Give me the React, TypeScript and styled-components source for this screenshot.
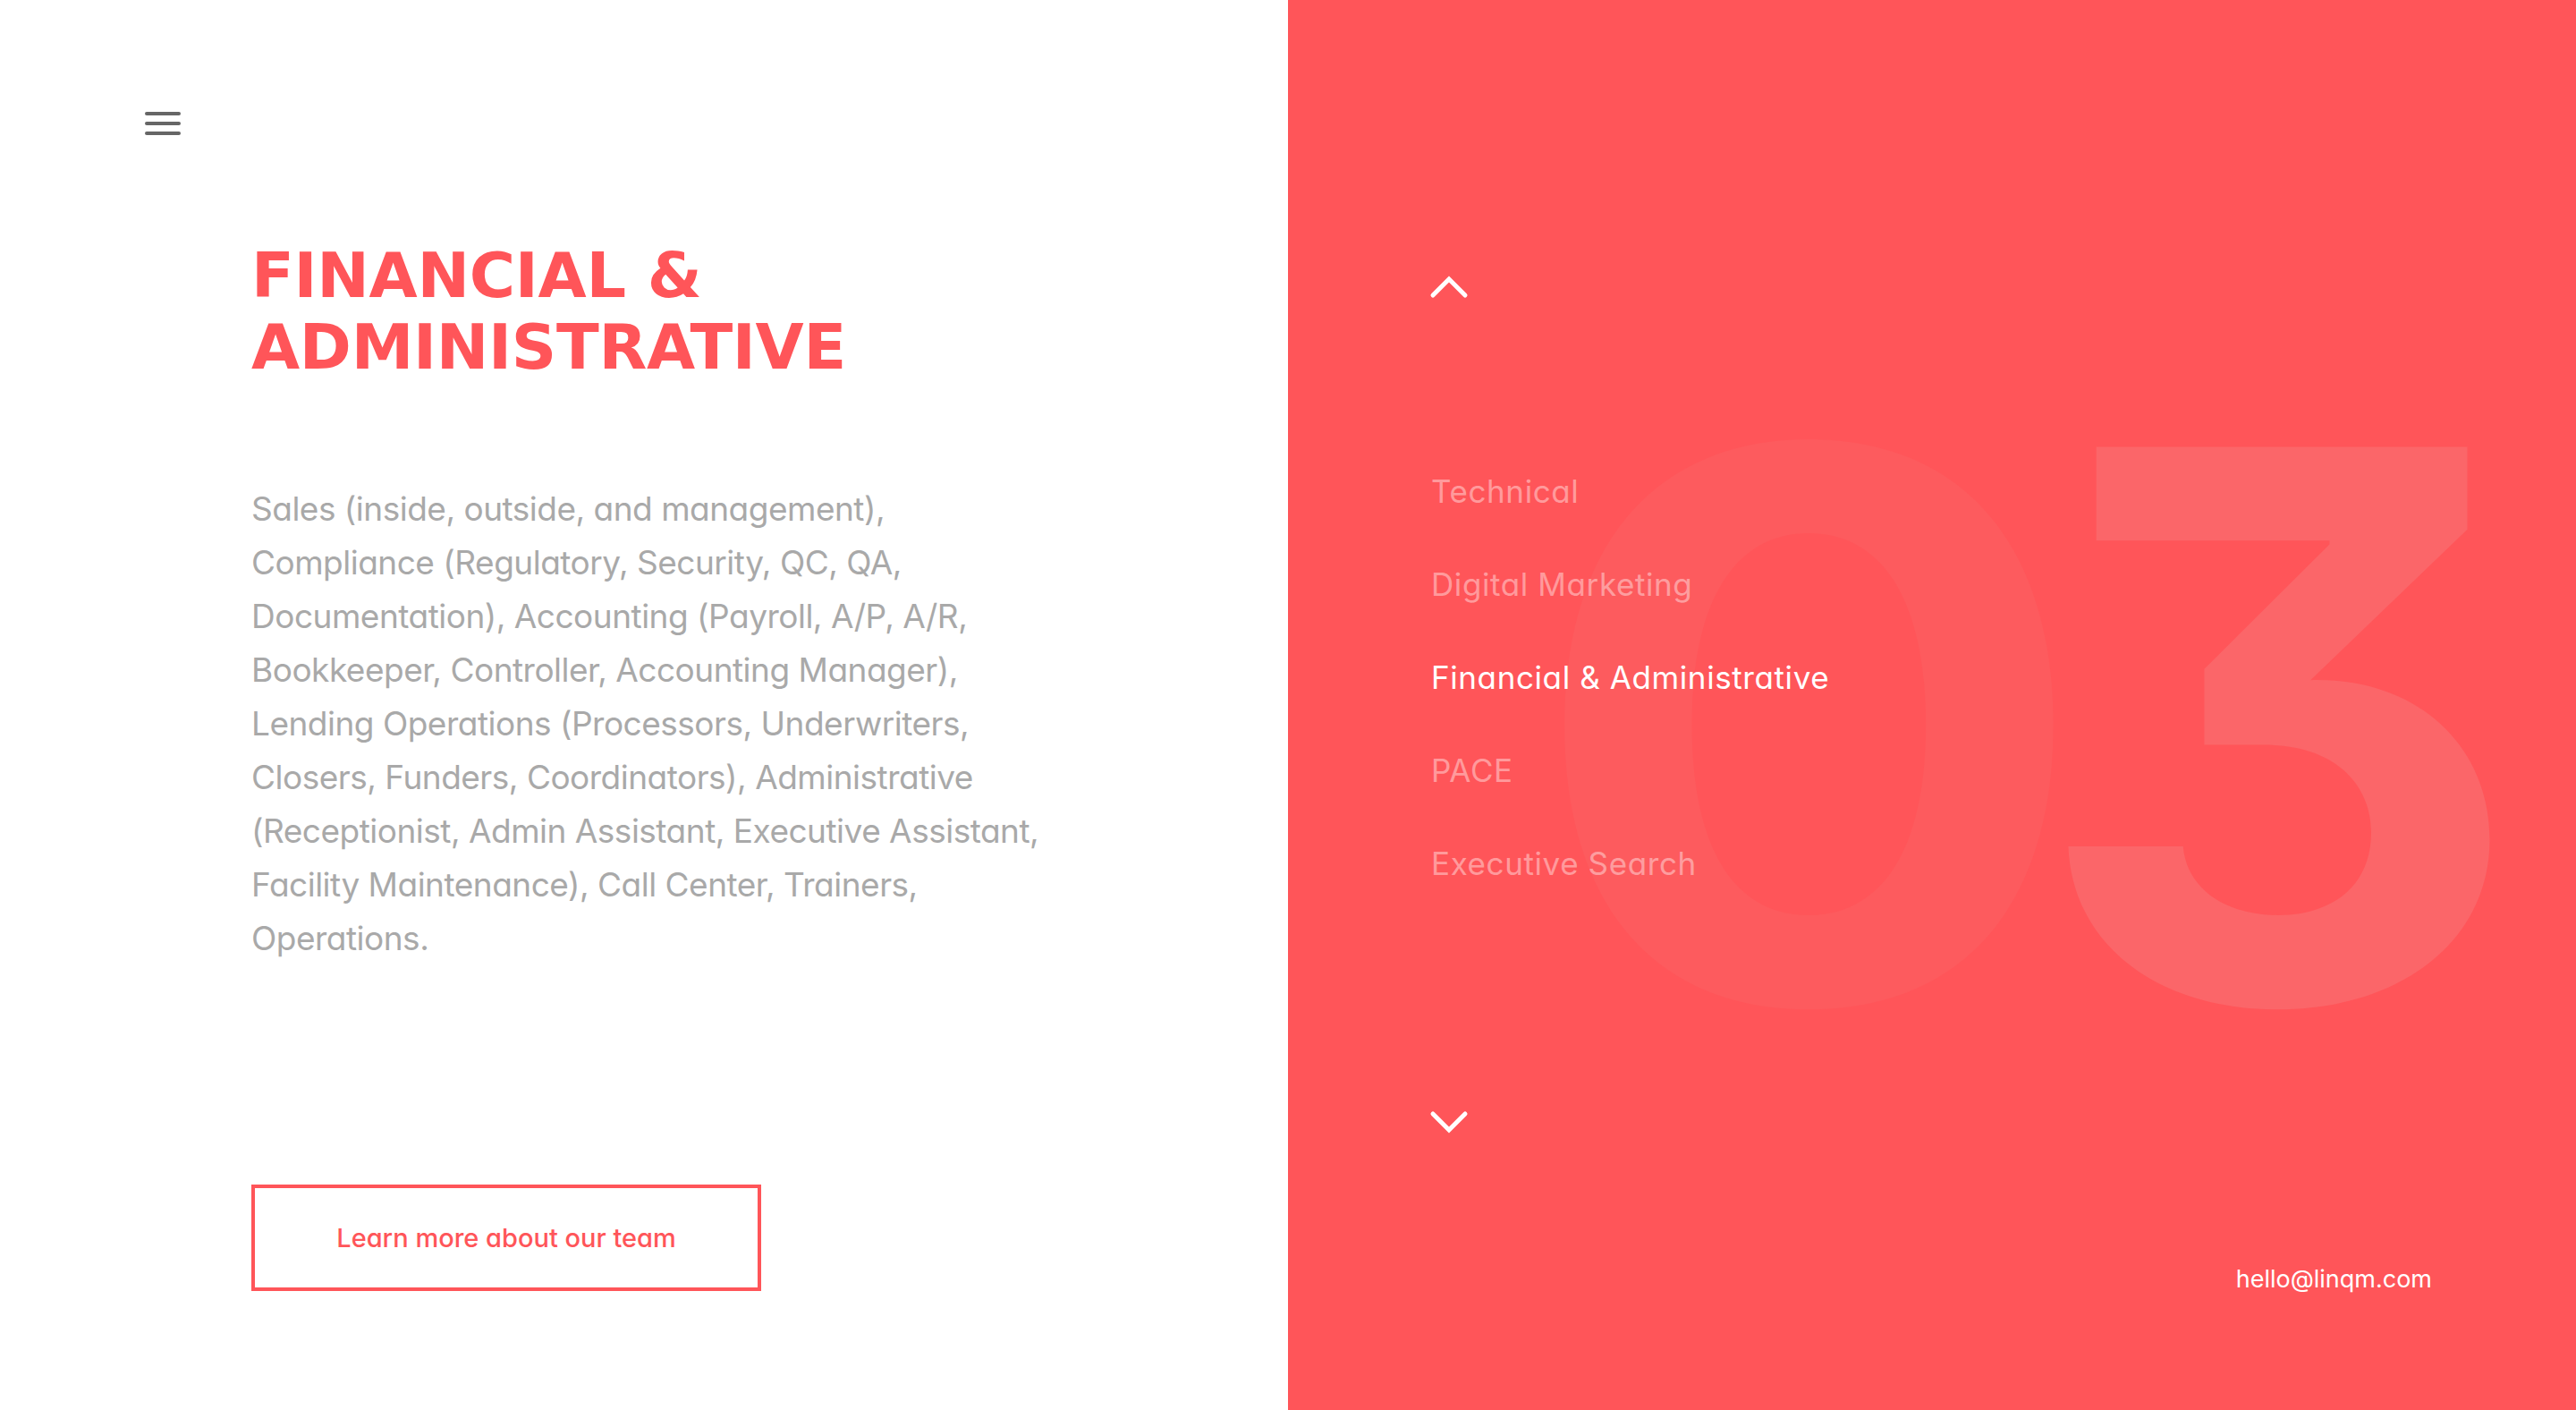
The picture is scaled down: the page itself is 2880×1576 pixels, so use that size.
import React from "react";
import styled, { createGlobalStyle } from "styled-components";

const RED = "#ff5559";
const FUTURA = `"Inter", "Liberation Sans", sans-serif`;
const HEAD = `"DejaVu Sans", "Liberation Sans", Arial, sans-serif`;

const GlobalStyle = createGlobalStyle`
  html, body { margin: 0; padding: 0; background: #fff; }
  body { font-family: ${FUTURA}; }
  * { box-sizing: border-box; }
`;

const Page = styled.div`
  display: grid;
  grid-template-columns: 1440px 1440px;
  width: 2880px;
  height: 1576px;
  overflow: hidden;
`;

const LeftPanel = styled.section`
  background: #fff;
  display: flex;
  flex-direction: column;
  padding: 125px 0 133px 162px;
`;

const MenuButton = styled.button`
  display: flex;
  flex-direction: column;
  gap: 7px;
  width: 40px;
  padding: 0;
  border: 0;
  background: none;
  cursor: pointer;
`;

const MenuBar = styled.span`
  display: block;
  width: 40px;
  height: 4px;
  border-radius: 2px;
  background: #666;
`;

const Content = styled.div`
  display: flex;
  flex-direction: column;
  flex: 1;
  margin-left: 119px;
`;

const Title = styled.h1`
  margin: 117px 0 0;
  font-family: ${HEAD};
  font-weight: 700;
  font-size: 70px;
  line-height: 80px;
  letter-spacing: -0.3px;
  color: ${RED};
  text-transform: uppercase;
`;

const Description = styled.p`
  margin: 111px 0 0;
  font-family: ${FUTURA};
  font-feature-settings: "cv11";
  font-weight: 400;
  font-size: 37px;
  line-height: 60px;
  letter-spacing: -0.5px;
  color: #a9a9a9;
  white-space: nowrap;
`;

const TeamButton = styled.a`
  margin-top: auto;
  display: flex;
  align-items: center;
  justify-content: center;
  width: 570px;
  height: 119px;
  border: 4px solid ${RED};
  color: ${RED};
  font-family: ${FUTURA};
  font-feature-settings: "cv11";
  font-weight: 500;
  font-size: 29px;
  text-decoration: none;
`;

const RightPanel = styled.section`
  position: relative;
  background: ${RED};
  display: flex;
  flex-direction: column;
  align-items: flex-start;
  padding: 305px 161px 0 160px;
  overflow: hidden;
`;

const BigNumber = styled.div`
  position: absolute;
  top: 384px;
  left: 266px;
  display: flex;
  font-family: "Inter", sans-serif;
  font-feature-settings: "cv09";
  font-weight: 700;
  font-size: 853px;
  line-height: 1;
  pointer-events: none;
`;

const Digit = styled.span<{ $faint?: boolean }>`
  display: inline-block;
  color: ${(p) => (p.$faint ? "#fd5b5e" : "#fb6669")};
  margin-left: ${(p) => (p.$faint ? "0" : "-10px")};
  transform: ${(p) => (p.$faint ? "scaleX(1.1)" : "none")};
  transform-origin: left center;
`;

const ChevronButton = styled.button`
  position: relative;
  z-index: 1;
  display: block;
  margin-left: -2px;
  padding: 0;
  border: 0;
  background: none;
  cursor: pointer;
  line-height: 0;
`;

const NavList = styled.ul`
  position: relative;
  z-index: 1;
  list-style: none;
  margin: 160px 0 221px;
  padding: 0;
`;

const NavItem = styled.li<{ $active?: boolean }>`
  font-family: ${FUTURA};
  font-feature-settings: "cv11";
  font-weight: 400;
  font-size: 35px;
  line-height: 104px;
  letter-spacing: 0.6px;
  white-space: nowrap;
  color: ${(p) => (p.$active ? "#ffffff" : "rgba(255,255,255,0.42)")};
`;

const Email = styled.a`
  position: relative;
  z-index: 1;
  align-self: flex-end;
  margin-top: 142px;
  font-family: ${FUTURA};
  font-feature-settings: "cv11";
  font-size: 27px;
  line-height: 36px;
  color: #fff;
  text-decoration: none;
`;

const Chevron = ({ up }: { up?: boolean }) => (
  <svg width="44" height="32" viewBox="0 0 44 32" fill="none">
    <path
      d={up ? "M4 25 L22 7 L40 25" : "M4 7 L22 25 L40 7"}
      stroke="#fff"
      strokeWidth="5"
      strokeLinecap="round"
      strokeLinejoin="miter"
    />
  </svg>
);

const lines = [
  "Sales (inside, outside, and management),",
  "Compliance (Regulatory, Security, QC, QA,",
  "Documentation), Accounting (Payroll, A/P, A/R,",
  "Bookkeeper, Controller, Accounting Manager),",
  "Lending Operations (Processors, Underwriters,",
  "Closers, Funders, Coordinators), Administrative",
  "(Receptionist, Admin Assistant, Executive Assistant,",
  "Facility Maintenance), Call Center, Trainers,",
  "Operations.",
];

const navItems = [
  "Technical",
  "Digital Marketing",
  "Financial & Administrative",
  "PACE",
  "Executive Search",
];

export default function App() {
  return (
    <>
      <GlobalStyle />
      <Page>
        <LeftPanel>
          <MenuButton aria-label="Menu">
            <MenuBar />
            <MenuBar />
            <MenuBar />
          </MenuButton>
          <Content>
            <Title>
              Financial &amp;
              <br />
              Administrative
            </Title>
            <Description>
              {lines.map((l, i) => (
                <React.Fragment key={i}>
                  {l}
                  {i < lines.length - 1 && <br />}
                </React.Fragment>
              ))}
            </Description>
            <TeamButton href="#">Learn more about our team</TeamButton>
          </Content>
        </LeftPanel>
        <RightPanel>
          <BigNumber aria-hidden>
            <Digit $faint>0</Digit>
            <Digit>3</Digit>
          </BigNumber>
          <ChevronButton aria-label="Previous">
            <Chevron up />
          </ChevronButton>
          <NavList>
            {navItems.map((n) => (
              <NavItem key={n} $active={n === "Financial & Administrative"}>
                {n}
              </NavItem>
            ))}
          </NavList>
          <ChevronButton aria-label="Next">
            <Chevron />
          </ChevronButton>
          <Email href="mailto:hello@linqm.com">hello@linqm.com</Email>
        </RightPanel>
      </Page>
    </>
  );
}
